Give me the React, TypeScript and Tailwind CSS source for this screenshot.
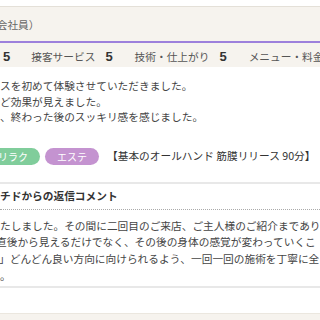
const Rating = ({ label, score }: { label: string; score: number }) => (
  <>
    <span className="ml-[12px] text-[#555]">{label}</span>
    <span className="ml-[10px] font-['Liberation_Sans',sans-serif] text-[13px] font-bold text-[#333]">{score}</span>
    <span className="ml-[10px] h-[13px] w-px bg-[#aaa]" />
  </>
);

const App = () => {
  return (
    <div className="h-[320px] w-[320px] overflow-hidden bg-white font-['Noto_Sans_CJK_JP',sans-serif] text-[10.7px] text-[#444]">
      <div className="h-[6px]" />

      {/* Reviewer header */}
      <div className="border-t border-[#e4e0d8] bg-[#f6f3ee]">
        <div className="flex h-[36px] items-center border-b-2 border-[#9d80dc] pt-[2px] text-[#666]">
          <span className="ml-[-14px] whitespace-nowrap">（会社員）</span>
        </div>
        <div className="flex h-[24px] items-center whitespace-nowrap pl-[3px] pt-[4px]">
          <span className="font-['Liberation_Sans',sans-serif] text-[13px] font-bold text-[#333]">5</span>
          <span className="ml-[9px] h-[13px] w-px bg-[#aaa]" />
          <Rating label="接客サービス" score={5} />
          <Rating label="技術・仕上がり" score={5} />
          <span className="ml-[12px] text-[#555]">メニュー・料金</span>
        </div>
      </div>

      {/* Review body */}
      <div className="whitespace-nowrap pt-[11px] leading-[15.5px]">
        <div>スを初めて体験させていただきました。</div>
        <div>ど効果が見えました。</div>
        <div>、終わった後のスッキリ感を感じました。</div>
      </div>

      <div className="mt-[23px] flex h-[17px] items-center whitespace-nowrap">
        <span className="ml-[-14px] flex h-[17px] w-[54px] shrink-0 items-center justify-center rounded-full bg-[#80cd9b] text-[10px] text-white">
          リラク
        </span>
        <span className="ml-[5px] flex h-[17px] w-[54px] shrink-0 items-center justify-center rounded-full bg-[#c493d0] text-[10px] text-white">
          エステ
        </span>
        <span className="ml-[8px] text-[#333]">【基本のオールハンド 筋膜リリース 90分】</span>
      </div>

      <div className="mt-[17px] h-[2px] bg-[#e8e8e8]" />

      {/* Salon reply */}
      <div className="mt-[4px] whitespace-nowrap font-bold leading-[16px] text-[#333]">チドからの返信コメント</div>
      <div className="mt-[5px] border-t border-dotted border-[#aaa]" />
      <div className="whitespace-nowrap pt-[8px] leading-[16.7px]">
        <div>たしました。その間に二回目のご来店、ご主人様のご紹介まであり</div>
        <div className="ml-[-4px]">直後から見えるだけでなく、その後の身体の感覚が変わっていくこ</div>
        <div className="ml-[-1px]">」どんどん良い方向に向けられるよう、一回一回の施術を丁寧に全</div>
        <div>。</div>
      </div>

      <div className="mt-[2px] h-[2px] bg-[#e8e8e8]" />
      <div className="mt-[25px] h-[10px] border-t border-[#ebe7df] bg-[#f6f3ee]" />
    </div>
  );
};

export default App;
